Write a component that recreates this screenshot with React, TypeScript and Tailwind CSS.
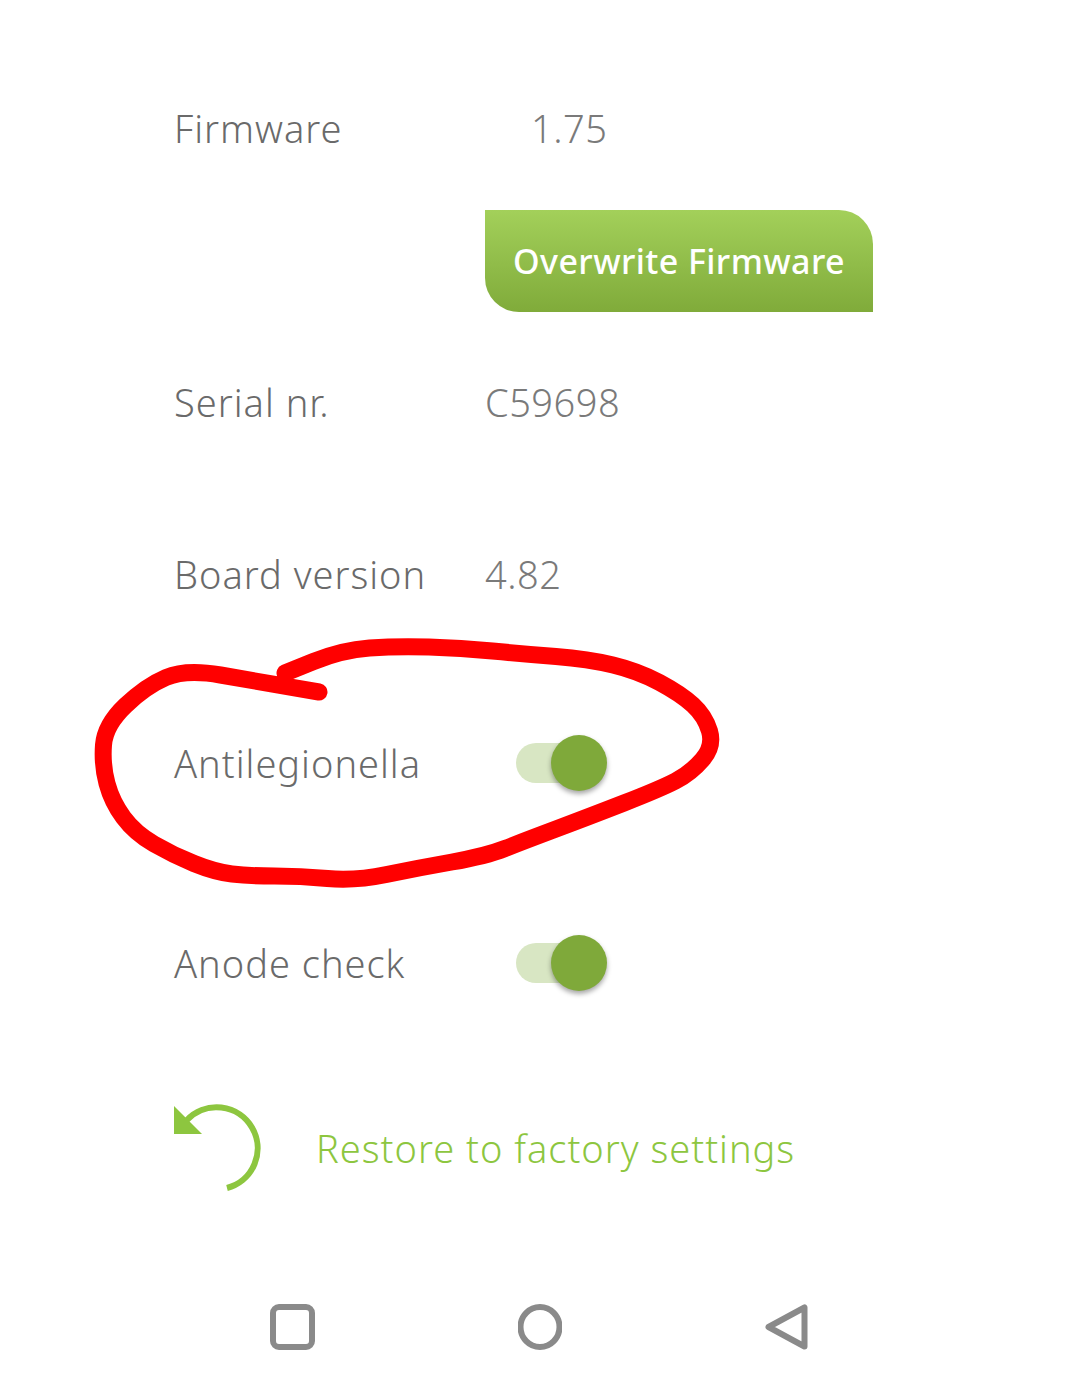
import React from 'react'

// Settings screen with a hand-drawn red annotation on top

const labelClass = "w-[311px] shrink-0 text-[38px] leading-[52px] font-light tracking-[1px] text-[#6a6a6a]"
const valueClass = "text-[38px] leading-[52px] font-light tracking-[0.5px] text-[#7a7a7a]"

// centre line of the marker stroke, from the pen-up end round to the start
const markerPoints: [number, number][] = [
  [319, 692], [255, 681], [186, 669], [146, 686], [105, 725], [102, 765], [112, 802],
  [135, 833], [173, 855], [215, 872], [249, 876], [300, 876], [355, 881], [418, 868],
  [486, 856], [524, 841], [588, 817], [660, 789], [691, 773], [714, 746], [705, 716],
  [681, 694], [638, 671], [588, 659], [524, 654], [461, 648], [397, 646], [342, 650],
  [285, 673],
]

function smoothPath(points: [number, number][]) {
  let d = `M${points[0][0]} ${points[0][1]}`
  for (let i = 1; i < points.length - 1; i++) {
    const [x, y] = points[i]
    const [nx, ny] = points[i + 1]
    d += ` Q${x} ${y} ${(x + nx) / 2} ${(y + ny) / 2}`
  }
  const last = points[points.length - 1]
  return `${d} L${last[0]} ${last[1]}`
}

function Toggle() {
  return (
    <div className="relative ml-[31px] h-[56px] w-[91px] flex items-center">
      <div className="h-[40px] w-[74px] rounded-full bg-[#d8e6c3]" />
      <div className="absolute right-0 top-0 h-[56px] w-[56px] rounded-full bg-[#7fa93a] shadow-[0_3px_5px_rgba(0,0,0,0.35)]" />
    </div>
  )
}

function InfoRow({ label, value }: { label: string; value: string }) {
  return (
    <div className="flex items-center h-[52px]">
      <div className={labelClass}>{label}</div>
      <div className={valueClass}>{value}</div>
    </div>
  )
}

function ToggleRow({ label }: { label: string }) {
  return (
    <div className="flex items-center h-[56px]">
      <div className={labelClass}>{label}</div>
      <Toggle />
    </div>
  )
}

export default function App() {
  return (
    <div
      className="relative h-[1388px] w-[1080px] overflow-hidden bg-white"
      style={{ fontFamily: '"Noto Sans", "Open Sans", sans-serif' }}
    >
      <div className="flex flex-col pl-[174px] pt-[102px]">
        {/* Firmware */}
        <div className="flex items-center h-[52px]">
          <div className={labelClass}>Firmware</div>
          <div className={`${valueClass} ml-[46px]`}>1.75</div>
        </div>

        <div className="mt-[56px] ml-[311px] flex h-[102px] w-[388px] items-center justify-center rounded-tr-[34px] rounded-bl-[34px] bg-gradient-to-b from-[#a3d05a] to-[#80ab3a] text-[34px] font-medium tracking-[0.4px] text-white">
          Overwrite Firmware
        </div>

        <div className="mt-[64px]">
          <InfoRow label="Serial nr." value="C59698" />
        </div>
        <div className="mt-[120px]">
          <InfoRow label="Board version" value="4.82" />
        </div>
        <div className="mt-[135px]">
          <ToggleRow label="Antilegionella" />
        </div>
        <div className="mt-[144px]">
          <ToggleRow label="Anode check" />
        </div>

        {/* Restore */}
        <div className="mt-[113px] flex items-center h-[90px]">
          <svg width="90" height="90" viewBox="174 1104 90 90" className="shrink-0">
            <path d="M187 1120 A41 41 0 1 1 227 1188" fill="none" stroke="#8dc63f" strokeWidth="6" />
            <path d="M174 1106 L174 1134 L202 1134 Z" fill="#8dc63f" />
          </svg>
          <div className="ml-[52px] mb-[2px] text-[38px] font-light tracking-[1px] text-[#8dc63f]">Restore to factory settings</div>
        </div>
      </div>

      {/* Android nav bar */}
      <div className="mt-[110px] ml-[270px] flex w-[538px] items-center justify-between">
        <svg width="45" height="46" viewBox="0 0 45 46">
          <rect x="3" y="3" width="39" height="40" rx="6" fill="none" stroke="#8a8a8a" strokeWidth="6" />
        </svg>
        <svg width="44" height="46" viewBox="0 0 44 46" className="-ml-[1px]">
          <ellipse cx="22" cy="23" rx="19.5" ry="20" fill="none" stroke="#8a8a8a" strokeWidth="6" />
        </svg>
        <svg width="43" height="46" viewBox="0 0 43 46">
          <path d="M39.5 3.5 L39.5 42.5 L3.5 23 Z" fill="none" stroke="#8a8a8a" strokeWidth="6" strokeLinejoin="round" />
        </svg>
      </div>

      {/* Red marker annotation */}
      <svg className="pointer-events-none absolute inset-0" width="1080" height="1388" viewBox="0 0 1080 1388">
        <path
          d={smoothPath(markerPoints)}
          fill="none"
          stroke="#ff0000"
          strokeWidth="17"
          strokeLinecap="round"
          strokeLinejoin="round"
        />
      </svg>
    </div>
  )
}
